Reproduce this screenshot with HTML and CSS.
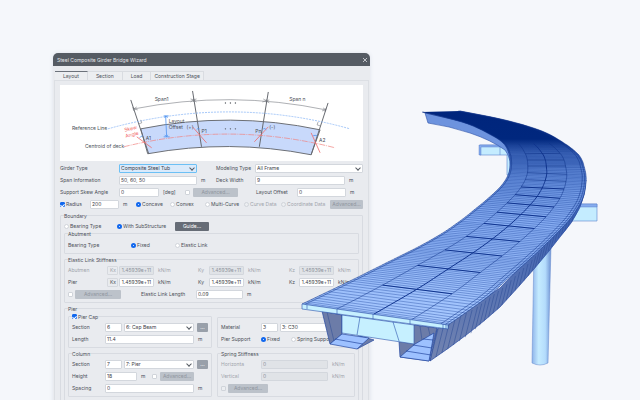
FILE: index.html
```
<!DOCTYPE html>
<html lang="en">
<head>
    <meta charset="UTF-8">
    <meta name="viewport" content="width=device-width, initial-scale=1.0">
    <title>Steel Composite Girder Bridge Wizard</title>
    <link rel="stylesheet" href="styles.css">
</head>
<body>
    <main class="stage">
        <section class="dialog">
            <header class="titlebar">
                <h1>Steel Composite Girder Bridge Wizard</h1>
                <button class="close" aria-label="Close">
                    <svg viewBox="0 0 6 6"><path d="M1 1 L5 5 M5 1 L1 5"/></svg>
                </button>
            </header>
            <nav class="tabs">
                <button class="tab active">Layout</button>
                <button class="tab">Section</button>
                <button class="tab">Load</button>
                <button class="tab">Construction Stage</button>
            </nav>
            <form class="panel">
                <svg class="diagram" viewBox="0 0 304 76">
                    <path class="deck" d="M81 44 Q171 26 261 45 L252 70 Q170 54 88 69 Z"/>
                    <path class="dim" d="M74 24 Q171 5 267 25 M73 22 l1 4 M134 13 v4 M207 14 v4 M267 23 l-1 4"/>
                    <path class="dim" d="M77 22 l-3 2 l4 1 M131 14 l3 1 l-3 2 M137 14 l-3 1 l3 2 M204 14 l3 2 l-4 1 M210 15 l-3 1 l3 2 M264 23 l3 2 l-4 1"/>
                    <path class="pier-line" d="M71 15 L89 69 M133 6 L142 62 M209 7 L200 62 M269 18 L252 70"/>
                    <path class="ref" d="M48 44 Q170 10 291 44"/>
                    <path class="centroid" d="M64 62 Q170 36 276 63"/>
                    <path class="skew" d="M77 52 L92 63 M133 42 L147 58 M209 42 L195 57 M252 48 L261 68"/>
                    <path class="offset" d="M104 31 h5 M106 31 L107 52 M104 52 h6 M105 33 l1 -2 l2 2 M105 50 l2 2 l1 -2 M80 53 q1 -2 3 -2 M137 45 q1 -2 3 -1 M204 44 q2 -1 3 1 M254 51 q2 -1 4 0"/>
                    <path class="dim" d="M79 39 l3 -1 l-1 -3 M259 37 l-1 3 l3 1"/>
                    <g class="dots">
                        <circle cx="166" cy="18" r="0.7"/><circle cx="171" cy="18" r="0.7"/><circle cx="176" cy="18" r="0.7"/>
                        <circle cx="166" cy="44" r="0.7"/><circle cx="171" cy="44" r="0.7"/><circle cx="176" cy="44" r="0.7"/>
                    </g>
                    <text x="95" y="16">Span1</text>
                    <text x="230" y="16">Span n</text>
                    <text x="12" y="45">Reference Line</text>
                    <text x="25" y="63">Centroid of deck</text>
                    <text x="109" y="38">Layout</text>
                    <text x="109" y="44">Offset</text>
                    <text x="127" y="44">(+)</text>
                    <text x="142" y="48">P1</text>
                    <text x="196" y="48">Pn</text>
                    <text x="210" y="44">(-)</text>
                    <text x="86" y="55">A1</text>
                    <text x="260" y="57">A2</text>
                    <text class="red" x="65" y="47" transform="rotate(-14 65 47)">Skew</text>
                    <text class="red" x="66" y="53" transform="rotate(-14 66 53)">Angle</text>
                </svg>

                <div class="row top">
                    <label for="girder">Girder Type</label>
                    <span class="select hot"><select id="girder"><option>Composite Steel Tub</option></select></span>
                    <span></span>
                    <label for="model">Modeling Type</label>
                    <span class="select wide"><select id="model"><option>All Frame</option></select></span>
                </div>
                <div class="row top">
                    <label for="span">Span Information</label>
                    <input type="text" id="span" value="50, 60, 50">
                    <span class="unit">m</span>
                    <label for="deck">Deck Width</label>
                    <input type="text" id="deck" value="9">
                    <span class="unit">m</span>
                </div>
                <div class="row skew-row">
                    <label for="skew">Support Skew Angle</label>
                    <input type="text" id="skew" value="0">
                    <span class="unit">[deg]</span>
                    <input type="checkbox" aria-label="Advanced skew angle">
                    <button type="button" class="btn" disabled>Advanced...</button>
                    <span></span>
                    <label for="layoutOffset">Layout Offset</label>
                    <input type="text" id="layoutOffset" value="0">
                    <span class="unit">m</span>
                </div>
                <div class="row radius-row">
                    <label class="pick"><input type="checkbox" checked>Radius</label>
                    <input type="text" aria-label="Radius value" value="200">
                    <span class="unit">m</span>
                    <label class="pick"><input type="radio" name="curve" checked>Concave</label>
                    <label class="pick"><input type="radio" name="curve">Convex</label>
                    <label class="pick"><input type="radio" name="curve">Multi-Curve</label>
                    <label class="pick off"><input type="radio" name="curve" disabled>Curve Data</label>
                    <label class="pick off"><input type="radio" name="curve" disabled>Coordinate Data</label>
                    <button type="button" class="btn" disabled>Advanced...</button>
                </div>

                <fieldset class="boundary">
                    <legend>Boundary</legend>
                    <div class="row bearing-row">
                        <label class="pick"><input type="radio" name="boundary">Bearing Type</label>
                        <label class="pick"><input type="radio" name="boundary" checked>With SubStructure</label>
                        <button type="button" class="btn dark">Guide...</button>
                    </div>

                    <fieldset class="abutment">
                        <legend>Abutment</legend>
                        <div class="row abut-row">
                            <span>Bearing Type</span>
                            <label class="pick"><input type="radio" name="abutment" checked>Fixed</label>
                            <label class="pick"><input type="radio" name="abutment">Elastic Link</label>
                        </div>
                    </fieldset>

                    <fieldset class="spaced">
                        <legend>Elastic Link Stiffness</legend>
                        <div class="row stiff-row off">
                            <span>Abutmen</span>
                            <label class="key" for="akx">Kx</label>
                            <input type="text" id="akx" value="1.45939e+11" disabled>
                            <span class="unit">kN/m</span>
                            <label for="aky">Ky</label>
                            <input type="text" id="aky" value="1.45939e+11" disabled>
                            <span class="unit">kN/m</span>
                            <label for="akz">Kz</label>
                            <input type="text" id="akz" value="1.45939e+11" disabled>
                            <span class="unit">kN/m</span>
                        </div>
                        <div class="row stiff-row">
                            <span>Pier</span>
                            <label class="key" for="pkx">Kx</label>
                            <input type="text" id="pkx" value="1.45939e+11">
                            <span class="unit">kN/m</span>
                            <label for="pky">Ky</label>
                            <input type="text" id="pky" value="1.45939e+11">
                            <span class="unit">kN/m</span>
                            <label for="pkz">Kz</label>
                            <input type="text" id="pkz" value="1.45939e+11">
                            <span class="unit">kN/m</span>
                        </div>
                        <div class="row link-row">
                            <input type="checkbox" aria-label="Advanced stiffness">
                            <button type="button" class="btn" disabled>Advanced...</button>
                            <span></span>
                            <label for="linkLength">Elastic Link Length</label>
                            <input type="text" id="linkLength" value="0.09">
                            <span class="unit">m</span>
                        </div>
                    </fieldset>

                    <fieldset class="spaced pier">
                        <legend>Pier</legend>
                        <div class="pier-grid">
                            <fieldset>
                                <legend><label class="pick"><input type="checkbox" checked>Pier Cap</label></legend>
                                <div class="row section-row">
                                    <label for="capNo">Section</label>
                                    <input type="text" id="capNo" value="6">
                                    <span class="select"><select aria-label="Cap section"><option>6: Cap Beam</option></select></span>
                                    <button type="button" class="btn more">...</button>
                                </div>
                                <div class="row length-row">
                                    <label for="capLength">Length</label>
                                    <input type="text" id="capLength" value="11.4">
                                    <span class="unit">m</span>
                                </div>
                            </fieldset>
                            <fieldset class="untitled">
                                <div class="row material-row">
                                    <label for="matNo">Material</label>
                                    <input type="text" id="matNo" value="3">
                                    <span class="select"><select aria-label="Material name"><option>3: C30</option></select></span>
                                </div>
                                <div class="row support-row">
                                    <span>Pier Support</span>
                                    <label class="pick"><input type="radio" name="support" checked>Fixed</label>
                                    <label class="pick"><input type="radio" name="support">Spring Support</label>
                                </div>
                            </fieldset>
                            <fieldset>
                                <legend>Column</legend>
                                <div class="row section-row">
                                    <label for="colNo">Section</label>
                                    <input type="text" id="colNo" value="7">
                                    <span class="select"><select aria-label="Column section"><option>7: Pier</option></select></span>
                                    <button type="button" class="btn more">...</button>
                                </div>
                                <div class="row height-row">
                                    <label for="colHeight">Height</label>
                                    <input type="text" id="colHeight" value="18">
                                    <span class="unit">m</span>
                                    <input type="checkbox" aria-label="Advanced height">
                                    <button type="button" class="btn" disabled>Advanced...</button>
                                </div>
                                <div class="row length-row">
                                    <label for="colSpacing">Spacing</label>
                                    <input type="text" id="colSpacing" value="0">
                                    <span class="unit">m</span>
                                </div>
                            </fieldset>
                            <fieldset>
                                <legend>Spring Stiffness</legend>
                                <div class="row spring-row off">
                                    <label for="springH">Horizonta</label>
                                    <input type="text" id="springH" value="0" disabled>
                                    <span class="unit">kN/m</span>
                                </div>
                                <div class="row spring-row off">
                                    <label for="springV">Vertical</label>
                                    <input type="text" id="springV" value="0" disabled>
                                    <span class="unit">kN/m</span>
                                </div>
                                <div class="row spring-adv">
                                    <input type="checkbox" aria-label="Advanced spring" disabled>
                                    <button type="button" class="btn" disabled>Advanced...</button>
                                </div>
                            </fieldset>
                        </div>
                    </fieldset>
                </fieldset>
            </form>
        </section>

        <svg class="bridge" viewBox="0 0 640 400" preserveAspectRatio="xMinYMin meet" aria-hidden="true">
            <defs>
                <linearGradient id="deckFill" gradientUnits="userSpaceOnUse" x1="0" y1="111" x2="0" y2="326">
                    <stop offset="0" stop-color="#00257c"/>
                    <stop offset="0.13" stop-color="#00277e"/>
                    <stop offset="0.2" stop-color="#3d65b8"/>
                    <stop offset="0.32" stop-color="#6a93e0"/>
                    <stop offset="0.55" stop-color="#8ab0f5"/>
                    <stop offset="1" stop-color="#a8c9ff"/>
                </linearGradient>
                <linearGradient id="column" x1="0" y1="0" x2="1" y2="0">
                    <stop offset="0" stop-color="#8fb4ea"/>
                    <stop offset="0.35" stop-color="#c4ebff"/>
                    <stop offset="0.7" stop-color="#b4dcfc"/>
                    <stop offset="1" stop-color="#6f93d4"/>
                </linearGradient>
                <linearGradient id="web" gradientUnits="userSpaceOnUse" x1="0" y1="220" x2="0" y2="360">
                    <stop offset="0" stop-color="#3d62b4"/>
                    <stop offset="1" stop-color="#7384b0"/>
                </linearGradient>
            </defs>
            <!-- piers behind the deck -->
            <path class="cap" d="M480 145 H512 V155 H480 Z M500 146 V155"/>
            <path class="cap-top" d="M479 145 H512 V147 H481 V155 H479 Z"/>
            <path class="cap" d="M507 155 H514 V175 H507 Z"/>
            <path class="cap" d="M570 204 H597 V221 H565 Z"/>
            <path class="cap-top" d="M570 204 H597 V207 H570 Z"/>
            <path class="shaft" d="M534 250 L532 363 Q540 367 548 363 L551 246 Z"/>
            <!-- girder sides -->
            <path class="far-web" d="M425 113 L428 123 Q449 126 470 133 T505 150 Q513 160 509 175 L516 156 L500 130 Z"/>
            <path class="near-web" d="M586 180 Q586 208 560 237 Q538 266 500 307 Q470 334 430 361 L437 329 L500 288 L560 228 Z"/>
            <g id="webLines"></g>
            <!-- tub girders at the front -->
            <path class="tub-web" d="M322 311 L342 315 V334 L330 344 Z"/>
            <path class="tub-web" d="M357 349 L374 340 L360 336 Z"/>
            <path class="tub-floor" d="M330 344 L342 334 L369 338 L357 349 Z M335 339 L363 344"/>
            <path class="tub-web" d="M399 341 L414 325 L437 328 L429 361 L400 357 Z"/>
            <path class="tub-floor" d="M400 357 L415 344 L434 333 L429 361 Z M406 351 L431 355 M413 345 L432 348 M423 339 L433 340"/>
            <path class="tub-line" d="M420 326 L422 340 M428 327 L430 335 M327 312 L334 341"/>
            <path class="beam" d="M342 315 L414 325 V344 L342 333 Z M360 317 L357 335 M393 322 L399 341"/>
            <path id="deckShape" fill="url(#deckFill)"/>
            <g id="deckMesh"></g>
            <path class="beam" d="M302 304 L448 325 V329 L302 309 Z M307 305 V309 M337 309 V314 M373 314 V319 M410 320 V324 M443 324 V329 M446 325 V329"/>
        </svg>
    </main>
    <script src="bridge.js"></script>
</body>
</html>
```

FILE: styles.css
```
* {
    box-sizing: border-box;
}

body {
    margin: 0;
    background-color: #f5f7fb;
    font-family: "Inter", "Liberation Sans", sans-serif;
    font-size: 5px;
    line-height: 6px;
    color: #4b5058;
}

.stage {
    position: relative;
    height: 100vh;
    padding: 53px 0 0 53px;
    overflow: hidden;
}

.bridge {
    position: absolute;
    top: 0;
    left: 0;
    width: 100%;
    pointer-events: none;
}

/* dialog */
.dialog {
    width: 54%;
    background-color: #e9ebef;
    border-radius: 5px 5px 0 0;
    box-shadow: 0 0 4px #dde1ea;
}

.titlebar {
    display: flex;
    align-items: center;
    justify-content: space-between;
    height: 13px;
    padding: 0 2px 0 4px;
    border-radius: 5px 5px 0 0;
    background-color: #555b63;
    color: #e4e6ea;
}

h1 {
    margin: 0;
    font-size: 5px;
    font-weight: 400;
}

button {
    border: 0;
    padding: 0;
    font: inherit;
    color: inherit;
}

.close {
    width: 6px;
    height: 6px;
    background: none;
}

.close svg {
    display: block;
    stroke: #f0f1f3;
    stroke-width: 0.7;
}

.tabs {
    display: flex;
    padding: 5px 2px 0;
}

.tab {
    height: 9px;
    padding: 0 8px;
    background-color: #eceef1;
    border-top: 1px solid #d9dce1;
    border-right: 1px solid #d9dce1;
}

.tab:last-child {
    padding: 0 3px;
}

.tab.active {
    border-top-color: #6c727b;
}

.panel {
    display: grid;
    gap: 3px;
    margin: 0 1px;
    padding: 4px 5px;
    border: 1px solid #dcdfe4;
    border-bottom: 0;
}

/* layout diagram */
.diagram {
    display: block;
    width: 100%;
    background-color: #fff;
    fill: none;
}

.diagram text {
    font-size: 5px;
    fill: #4b5058;
}

.diagram .red {
    fill: #f0625f;
}

.deck {
    fill: #c8d9fb;
    stroke: #6c6f75;
}

.dim {
    stroke: #777b82;
    stroke-width: 0.6;
}

.pier-line {
    stroke: #66696f;
}

.ref {
    stroke: #7fb0f5;
    stroke-width: 0.7;
    stroke-dasharray: 2 1;
}

.centroid {
    stroke: #f0817f;
    stroke-width: 0.7;
    stroke-dasharray: 6 1 1 1;
}

.skew {
    stroke: #ee6a68;
    stroke-width: 0.8;
}

.offset {
    stroke: #4f93f0;
    stroke-width: 0.8;
}

.dots {
    fill: #55595f;
}

/* form rows */
.row {
    display: grid;
    align-items: center;
    height: 9px;
    white-space: nowrap;
}

.top { grid-template-columns: 59px 78px 19px 39px 90px 1fr; }
.skew-row { grid-template-columns: 59px 40px 26px 8px 45px 18px 41px 49px 1fr; }
.radius-row { grid-template-columns: 30px 29px 17px 34px 35px 39px 37px 49px 1fr; }
.bearing-row { grid-template-columns: 53px 58px 34px; }
.abut-row { grid-template-columns: 63px 44px 1fr; }
.stiff-row { grid-template-columns: 39px 12px 35px 44px 11px 35px 45px 10px 35px 1fr; }
.link-row { grid-template-columns: 7px 46px 20px 55px 47px 1fr; }
.section-row { grid-template-columns: 33px 17px 72px 1fr; }
.length-row { grid-template-columns: 33px 89px 1fr; }
.material-row { grid-template-columns: 40px 17px 1fr; }
.support-row { grid-template-columns: 40px 30px 1fr; }
.height-row { grid-template-columns: 33px 32px 15px 8px 34px; }
.spring-row { grid-template-columns: 40px 67px 1fr; }
.spring-adv { grid-template-columns: 7px 40px; }

.unit {
    padding-left: 4px;
}

.wide {
    grid-column: 5 / 7;
}

.off {
    color: #9fa4ac;
}

input[type="text"],
select {
    width: 100%;
    min-width: 0;
    height: 9px;
    margin: 0;
    padding: 0 1px;
    border: 1px solid #d3d7dd;
    border-radius: 1px;
    background-color: #fff;
    font: inherit;
    color: #3d4148;
}

input[type="text"]:disabled {
    background-color: #e0e3e7;
    color: #8d929a;
}

.stiff-row input[type="text"] {
    padding: 0;
    text-align: center;
}

select {
    display: block;
    appearance: none;
}

.select {
    position: relative;
}

.select::after {
    content: "";
    position: absolute;
    top: 2px;
    right: 3px;
    width: 3px;
    height: 3px;
    border: solid #555b63;
    border-width: 0 1px 1px 0;
    transform: rotate(45deg);
}

.hot select {
    border-color: #6cc0f5;
    background-color: #daeafb;
}

.section-row .select,
.material-row .select {
    padding-left: 2px;
}

.key {
    width: 11px;
    height: 9px;
    padding-left: 2px;
    border: 1px solid #d6d9de;
    border-radius: 1px;
}

.pick {
    display: flex;
    align-items: center;
    gap: 1px;
}

input[type="checkbox"],
input[type="radio"] {
    appearance: none;
    flex: none;
    width: 5px;
    height: 5px;
    margin: 0;
    border: 1px solid #d0d4da;
    border-radius: 1px;
    background-color: #fff;
}

input[type="radio"] {
    border-radius: 50%;
}

input[type="checkbox"]:checked {
    display: grid;
    place-items: center;
    border-color: #1268ee;
    background-color: #1268ee;
}

input[type="checkbox"]:checked::after {
    content: "";
    width: 2px;
    height: 3px;
    border: solid #fff;
    border-width: 0 1px 1px 0;
    transform: rotate(45deg);
}

input[type="radio"]:checked {
    border: 2px solid #1268ee;
}

input:disabled {
    background-color: #eceef1;
}

.btn {
    height: 9px;
    border-radius: 1px;
    background-color: #bcc2ca;
    color: #8f959e;
    text-align: center;
}

.btn.dark {
    background-color: #666c76;
    color: #fff;
}

.btn.more {
    width: 11px;
    margin-left: 3px;
    background-color: #99a0aa;
    color: #fff;
}

/* groups */
fieldset {
    display: grid;
    gap: 3px;
    min-width: 0;
    margin: 0;
    padding: 3px;
    border: 1px solid #d8dbe1;
    border-radius: 1px;
}

legend {
    height: 6px;
    padding: 0;
}

legend .pick {
    height: 6px;
}

.boundary {
    gap: 0;
    margin-top: 1px;
}

.abutment {
    padding-top: 4px;
}

.spaced {
    margin-top: 3px;
}

.pier {
    padding-top: 2px;
}

.pier-grid {
    display: grid;
    grid-template-columns: 144px 1fr;
    gap: 3px 5px;
}

.untitled {
    margin-top: 3px;
    padding-top: 5px;
}

/* bridge model */
.cap {
    fill: #c4ecff;
    stroke: #5d83cc;
    stroke-width: 0.6;
}

.cap-top {
    fill: #86acee;
    stroke: #4a70c0;
    stroke-width: 0.4;
}

.shaft {
    fill: url(#column);
    stroke: #6288cc;
    stroke-width: 0.5;
}

.far-web {
    fill: #6d93de;
    stroke: #2a51a8;
    stroke-width: 0.6;
}

.near-web {
    fill: url(#web);
    stroke: #2448a0;
    stroke-width: 0.7;
}

.tub-web {
    fill: #6c7ca8;
    stroke: #2448a0;
    stroke-width: 0.7;
}

.tub-floor {
    fill: #9dc1ff;
    stroke: #2448a0;
    stroke-width: 0.7;
}

.tub-line,
.web-line {
    fill: none;
    stroke: #2b4a94;
    stroke-width: 0.5;
}

.beam {
    fill: #c6f0ff;
    stroke: #2a52ac;
    stroke-width: 0.6;
}

.mesh {
    fill: none;
    stroke: #1f479f;
    stroke-width: 0.4;
}

.rail {
    fill: none;
    stroke: #0c3187;
    stroke-width: 0.5;
}

.spine {
    fill: none;
    stroke: #0f338e;
    stroke-width: 1;
}
```

FILE: bridge.js
```
// left edge x, y and right edge x, y of the deck, front to back
const stations = [
    [302, 304, 448, 325],
    [350, 281, 486, 298],
    [388, 262, 511, 276],
    [418, 247, 530, 259],
    [441, 234, 546, 244],
    [460, 221, 559, 231],
    [474, 210, 570, 219],
    [485, 201, 577, 209],
    [494, 193, 582, 200],
    [501, 186, 585, 190],
    [506, 179, 586, 182],
    [509, 172, 586, 175],
    [510, 166, 584, 166],
    [510, 160, 582, 160],
    [509, 154, 577, 153],
    [504, 144, 564, 143],
    [491, 135, 542, 131],
    [465, 123, 505, 120],
    [422, 112, 460, 111]
];

const NS = "http://www.w3.org/2000/svg";
const mesh = document.getElementById("deckMesh");

function spline(a, b, c, d, t) {
    return 0.5 * (2 * b + (c - a) * t + (2 * a - 5 * b + 4 * c - d) * t * t + (3 * b - a - 3 * c + d) * t * t * t);
}

function station(t) {
    const last = stations.length - 1;
    const i = Math.min(Math.floor(t), last - 1);
    const at = (n) => stations[Math.max(0, Math.min(last, n))];
    return [0, 1, 2, 3].map((k) => spline(at(i - 1)[k], at(i)[k], at(i + 1)[k], at(i + 2)[k], t - i));
}

// point at fraction u across the deck
function point(t, u) {
    const s = station(t);
    return (s[0] + (s[2] - s[0]) * u).toFixed(1) + " " + (s[1] + (s[3] - s[1]) * u).toFixed(1);
}

function along(u, from, to) {
    const pts = [];
    for (let n = 0; n <= 100; n++) {
        pts.push(point(from + (to - from) * n / 100, u));
    }
    return pts;
}

function draw(parent, d, cls) {
    const path = document.createElementNS(NS, "path");
    path.setAttribute("d", d);
    path.setAttribute("class", cls);
    parent.appendChild(path);
}

const end = stations.length - 1;
document.getElementById("deckShape").setAttribute("d",
    "M" + along(0, 0, end).concat(along(1, end, 0)).join(" L") + " Z");

// fine cross lines, the far end is too dark to show any
let fine = "";
for (let i = 0; i < 15; i++) {
    const length = Math.hypot(stations[i + 1][0] - stations[i][0], stations[i + 1][1] - stations[i][1]);
    const count = Math.max(5, Math.round(Math.min(12, length / 3)));
    for (let n = 0; n < count; n++) {
        fine += "M" + point(i + n / count, 0) + " L" + point(i + n / count, 1);
    }
}
draw(mesh, fine, "mesh");

[0, 0.02, 0.95, 0.98, 1].forEach((u) => {
    draw(mesh, "M" + along(u, 0, end).join(" L"), "rail");
});
[0.24, 0.75].forEach((u) => {
    draw(mesh, "M" + along(u, 0, 15).join(" L"), "rail");
});
draw(mesh, "M" + along(0.49, 0, 15).join(" L"), "spine");

for (let i = 1; i < 15; i++) {
    draw(mesh, "M" + point(i, 0.24) + " L" + point(i, 0.75), i < 10 ? "spine" : "rail");
}

// stiffeners on the outer web
let ribs = "";
const foot = [[430, 361], [470, 334], [500, 307], [530, 274], [552, 246], [575, 218]];
for (let n = 0; n < 34; n++) {
    const t = n / 34 * 5;
    const i = Math.floor(t);
    const x = foot[i][0] + (foot[i + 1][0] - foot[i][0]) * (t - i);
    const y = foot[i][1] + (foot[i + 1][1] - foot[i][1]) * (t - i);
    const rise = 32 - n * 0.8;
    ribs += "M" + x.toFixed(1) + " " + y.toFixed(1) + " l" + (rise / 4).toFixed(1) + " " + -rise.toFixed(1);
}
draw(document.getElementById("webLines"), ribs, "web-line");
```
